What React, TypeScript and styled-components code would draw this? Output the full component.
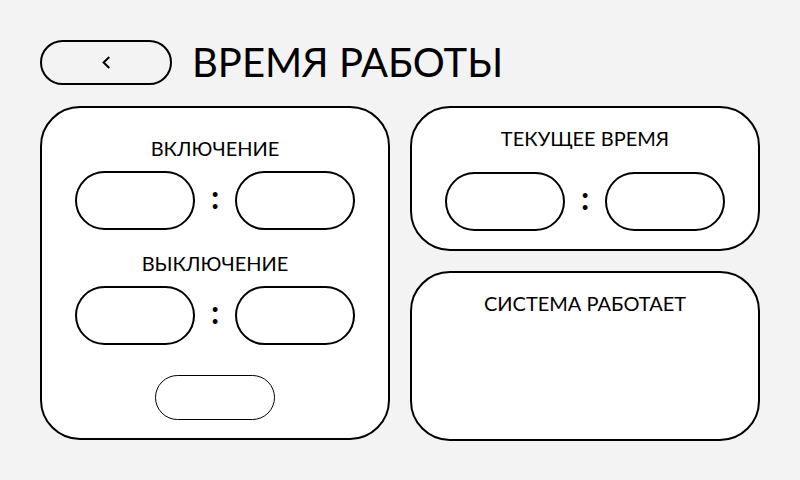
import React from "react";
import styled, { createGlobalStyle } from "styled-components";

const GlobalStyle = createGlobalStyle`
  *, *::before, *::after { box-sizing: border-box; }
  body {
    margin: 0;
    background: #f3f3f3;
    color: #000;
    font-family: Lato, "Open Sans", sans-serif;
  }
`;

const Page = styled.main`
  display: flex;
  flex-direction: column;
  gap: 21px;
  padding: 40px;
  padding-bottom: 39px;
`;

const Header = styled.header`
  display: flex;
  align-items: flex-start;
  gap: 20px;
`;

const BackButton = styled.button`
  display: grid;
  place-items: center;
  width: 132px;
  height: 45px;
  padding: 0;
  border: 2px solid #000;
  border-radius: 23px;
  background: transparent;
  color: inherit;
  cursor: pointer;
`;

const Title = styled.h1`
  margin: 0;
  font-size: 40px;
  line-height: 44px;
  font-weight: 400;
`;

const Columns = styled.div`
  display: grid;
  grid-template-columns: 1fr 1fr;
  align-items: start;
  gap: 20px;
`;

const Stack = styled.div`
  display: grid;
  gap: 20px;
`;

const Card = styled.section<{ $gap: number; $top: number; $minHeight?: number }>`
  display: flex;
  flex-direction: column;
  align-items: center;
  gap: ${(p) => p.$gap}px;
  min-height: ${(p) => p.$minHeight ?? 0}px;
  padding: ${(p) => p.$top}px 18px 18px;
  border: 2px solid #000;
  border-radius: 40px;
  background: #fff;
`;

const Schedule = styled.div`
  display: grid;
  gap: 21px;
`;

const TimeGroup = styled.div<{ $gap: number }>`
  display: flex;
  flex-direction: column;
  align-items: center;
  gap: ${(p) => p.$gap}px;
`;

const Label = styled.h2`
  margin: 0;
  font-size: 20px;
  line-height: 24px;
  font-weight: 400;
`;

const TimeRow = styled.div`
  display: grid;
  grid-template-columns: 120px 40px 120px;
  align-items: center;
`;

const TimeInput = styled.input`
  width: 100%;
  height: 59px;
  padding: 0 16px;
  border: 2px solid #000;
  border-radius: 30px;
  background: #fff;
  color: inherit;
  font: inherit;
  font-size: 32px;
  text-align: center;
`;

const Colon = styled.span`
  padding-bottom: 8px;
  font-size: 32px;
  line-height: 40px;
  font-weight: 700;
  text-align: center;
`;

const SaveButton = styled.button`
  width: 120px;
  height: 45px;
  border: 1px solid #000;
  border-radius: 23px;
  background: #fff;
  cursor: pointer;
`;

function TimeField({ label, gap }: { label: string; gap: number }) {
  return (
    <TimeGroup $gap={gap}>
      <Label>{label}</Label>
      <TimeRow role="group" aria-label={label}>
        <TimeInput inputMode="numeric" maxLength={2} aria-label={`${label}: часы`} />
        <Colon>:</Colon>
        <TimeInput inputMode="numeric" maxLength={2} aria-label={`${label}: минуты`} />
      </TimeRow>
    </TimeGroup>
  );
}

export default function App() {
  return (
    <>
      <GlobalStyle />
      <Page>
        <Header>
          <BackButton type="button" aria-label="Назад">
            <svg width="10" height="14" viewBox="0 0 10 14" fill="none" stroke="currentColor" strokeWidth="2">
              <path d="M8.3 1L2.6 6.5l5.7 5.5" />
            </svg>
          </BackButton>
          <Title>ВРЕМЯ РАБОТЫ</Title>
        </Header>
        <Columns>
          <Card $gap={30} $top={28}>
            <Schedule>
              <TimeField label="ВКЛЮЧЕНИЕ" gap={11} />
              <TimeField label="ВЫКЛЮЧЕНИЕ" gap={11} />
            </Schedule>
            <SaveButton type="button" aria-label="Сохранить" />
          </Card>
          <Stack>
            <Card $gap={0} $top={18}>
              <TimeField label="ТЕКУЩЕЕ ВРЕМЯ" gap={22} />
            </Card>
            <Card $gap={0} $top={18} $minHeight={170}>
              <Label>СИСТЕМА РАБОТАЕТ</Label>
            </Card>
          </Stack>
        </Columns>
      </Page>
    </>
  );
}
